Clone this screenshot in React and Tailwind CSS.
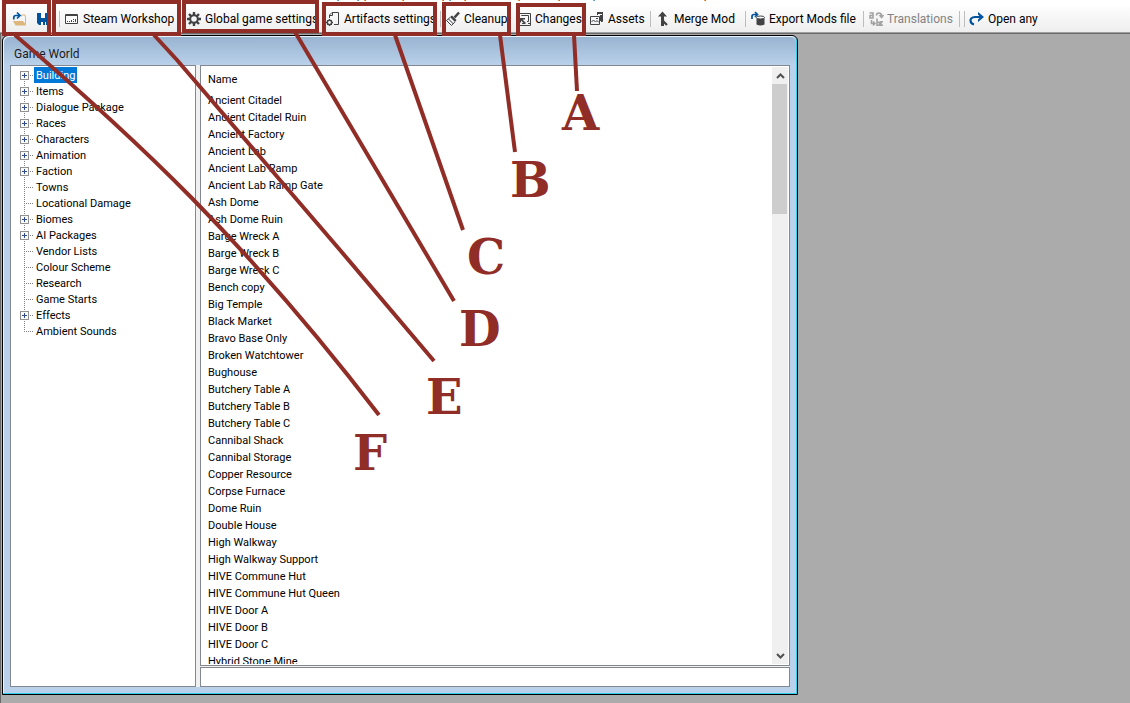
const INK = '#404244';

function Icon({ children }) {
  return (
    <svg viewBox="0 0 16 16" className="h-4 w-4 shrink-0" aria-hidden="true">
      {children}
    </svg>
  );
}

const OpenIcon = () => (
  <Icon>
    <path d="M9.500 5.500V4H13v1.500h.500V13" fill="none" stroke="#dcb67a" />
    <path d="M1 10h10l3.500 4.500H3.500z" fill="#dcb67a" />
    <path d="M1.800 8.500V6.500Q1.800 4.500 4 4.500h3.500M5 1.500l3 3-3 3" fill="none" stroke="#00539c" strokeWidth="1.700" />
  </Icon>
);
const SaveIcon = () => (
  <Icon>
    <path d="M1 2h13v12H3l-2-2z" fill="#00539c" />
    <path d="M5 2h4v5H5zM5 11h2v3H5zM9 11h1v3H9z" fill="#fff" />
  </Icon>
);
const WorkshopIcon = () => (
  <Icon>
    <path d="M1.500 3.500h12v9h-12z" fill="#fafafa" stroke={INK} />
    <path d="M1 4.500h13" stroke={INK} strokeWidth="1" />
    <path d="M3 10h1v1H3zM5 10h1v1H5zM7 9h1v2H7zM9 8h1v1H9zM9 10h1v1H9zM11 8h1v3h-1z" fill={INK} />
  </Icon>
);
const GearIcon = () => (
  <Icon>
    <g transform="translate(8 8)" fill="none" stroke={INK}>
      <circle r="3.800" strokeWidth="2" />
      <path
        strokeWidth="2.400"
        d="M0-4V-7M0 4V7M-4 0H-7M4 0H7M2.900-2.900L5-5M-2.900-2.900L-5-5M2.900 2.900L5 5M-2.900 2.900L-5 5"
      />
    </g>
  </Icon>
);
const ArtifactIcon = () => (
  <Icon>
    <path d="M4.500 7V4L7 1.500h6.500v12H9" fill="none" stroke={INK} />
    <path d="M4 4.500h3.500V1" fill="none" stroke={INK} />
    <circle cx="4.500" cy="11.500" r="2.200" fill="none" stroke={INK} strokeWidth="1.500" />
    <path d="M4.500 8v1.500M4.500 13.500V15M1 11.500h1.500M6.500 11.500H8M2 9l1 1M6 13l1 1M7 9l-1 1M3 13l-1 1" stroke={INK} />
  </Icon>
);
const BroomIcon = () => (
  <Icon>
    <path d="M14 1.500L9.500 6.500" stroke={INK} strokeWidth="2.600" />
    <path d="M7 4.500l4.500 4.500L10 11 5 6z" fill={INK} />
    <path d="M5 6.500L1.500 9.500l5 5L9.800 11M3.500 8l5 5" fill="none" stroke={INK} />
  </Icon>
);
const ChangesIcon = () => (
  <Icon>
    <path d="M3.500 5V2.500h11v10H12M5.500 5v-.5h7v6H11M3.500 11v3.500H14.500V12M6 12.500h3" fill="none" stroke={INK} />
    <path d="M3 7h6v1.500H6.500L10 12l-1.200 1.200L5 9.500v2H3z" fill={INK} />
  </Icon>
);
const AssetsIcon = () => (
  <Icon>
    <path d="M1.500 5.500h9v8h-9z" fill="none" stroke={INK} />
    <path d="M2.500 11l2-2 2 2 1.500-1.500 2 2" fill="none" stroke={INK} />
    <path d="M7 7h2v1H7zM8 1h6v2H8zM12 4h2v6h-2z" fill={INK} />
    <path d="M8.500 4V1.500h5v9H12M11.500 4v6" fill="none" stroke={INK} />
  </Icon>
);
const MergeIcon = () => (
  <Icon>
    <path d="M8 8v2l4 4" fill="none" stroke={INK} strokeWidth="2.200" />
    <path d="M7.500 .5l4.500 5H3zM6 5h3v10H6z" fill={INK} />
  </Icon>
);
const ExportIcon = () => (
  <Icon>
    <path d="M2 8V5.500Q2 3.500 4 3.500h3M5 1l2.500 2.500L5 6" fill="none" stroke="#00539c" strokeWidth="1.700" />
    <path d="M6.500 7v6.500q4 2 8 0V7z" fill={INK} />
    <ellipse cx="10.500" cy="6.500" rx="4" ry="1.500" fill="#f5f5f5" stroke={INK} />
  </Icon>
);
const TranslateIcon = () => (
  <Icon>
    <g fill="none" stroke="#a3a3a3" strokeWidth="1.600">
      <path d="M1.500 2h3.500v5H2V4.500h3M8.500 4.500Q8.500 2 11 2t2.500 3M11.500 4l2 2.500 2-2.500" />
      <path d="M3.500 9v3.500h3M5 10.500l2 2-2 2M9 7.500v6.700h2.500v-3H9M15 10.700h-2v3.500h2" />
    </g>
  </Icon>
);
const RedoIcon = () => (
  <Icon>
    <path d="M5 13.500Q1.500 12.500 1.500 9.500T6 6h6" fill="none" stroke="#00539c" strokeWidth="2.200" />
    <path d="M9 1l6 5-6 5V8.500L11.500 6 9 3.500z" fill="#00539c" />
  </Icon>
);

function ToolButton({ icon, label, className = '', disabled, name }) {
  return (
    <button
      type="button"
      disabled={disabled}
      aria-label={name}
      className={`flex h-full shrink-0 items-center gap-[3px] whitespace-nowrap ${disabled ? 'text-[#838383]' : 'text-black'} ${className}`}
    >
      {icon}
      {label && <span>{label}</span>}
    </button>
  );
}

const Separator = () => <span className="mr-1 h-4 w-px shrink-0 bg-[#bdbdbd]" />;

const TICKS = [338, 358, 365, 403, 443, 450, 465, 519, 559, 594, 705];

function Toolbar() {
  return (
    <header className="shrink-0 overflow-hidden border-b border-[#696969] bg-white">
      <svg width="720" height="7" viewBox="0 0 720 7" className="block" aria-hidden="true">
        {TICKS.map((x) => (
          <g key={x}>
            <rect x={x - 1} y="0" width="1" height="1" fill="#e8a04c" />
            <rect x={x} y="0" width="1" height="1" fill="#4a90c8" />
          </g>
        ))}
      </svg>
      <div
        role="toolbar"
        aria-label="Main"
        className="flex h-[26px] items-center border-b border-[#a0a0a0] bg-gradient-to-b from-[#fdfdfd] to-[#eeeeee] pb-px pl-3 font-['Roboto','Open_Sans',sans-serif] text-[12px]"
      >
        <ToolButton icon={<OpenIcon />} name="Open" className="w-6" />
        <ToolButton icon={<SaveIcon />} name="Save" className="w-[23px]" />
        <Separator />
        <ToolButton icon={<WorkshopIcon />} label="Steam Workshop" className="w-[122px]" />
        <ToolButton icon={<GearIcon />} label="Global game settings" className="w-[139px]" />
        <ToolButton icon={<ArtifactIcon />} label="Artifacts settings" className="w-[115px]" />
        <Separator />
        <ToolButton icon={<BroomIcon />} label="Cleanup" className="w-[71px]" />
        <ToolButton icon={<ChangesIcon />} label="Changes" className="w-[73px]" />
        <ToolButton icon={<AssetsIcon />} label="Assets" className="w-[61px]" />
        <Separator />
        <ToolButton icon={<MergeIcon />} label="Merge Mod" className="w-[90px]" />
        <Separator />
        <ToolButton icon={<ExportIcon />} label="Export Mods file" className="w-[113px]" />
        <Separator />
        <ToolButton icon={<TranslateIcon />} label="Translations" className="w-[91px]" disabled />
        <Separator />
        <Separator />
        <ToolButton icon={<RedoIcon />} label="Open any" />
      </div>
    </header>
  );
}

const CATEGORIES = [
  ['Building', true], ['Items', true], ['Dialogue Package', true], ['Races', true],
  ['Characters', true], ['Animation', true], ['Faction', true], ['Towns', false],
  ['Locational Damage', false], ['Biomes', true], ['AI Packages', true],
  ['Vendor Lists', false], ['Colour Scheme', false], ['Research', false],
  ['Game Starts', false], ['Effects', true], ['Ambient Sounds', false],
];

const NAMES = [
  'Ancient Citadel', 'Ancient Citadel Ruin', 'Ancient Factory', 'Ancient Lab',
  'Ancient Lab Ramp', 'Ancient Lab Ramp Gate', 'Ash Dome', 'Ash Dome Ruin',
  'Barge Wreck A', 'Barge Wreck B', 'Barge Wreck C', 'Bench copy', 'Big Temple',
  'Black Market', 'Bravo Base Only', 'Broken Watchtower', 'Bughouse',
  'Butchery Table A', 'Butchery Table B', 'Butchery Table C', 'Cannibal Shack',
  'Cannibal Storage', 'Copper Resource', 'Corpse Furnace', 'Dome Ruin',
  'Double House', 'High Walkway', 'High Walkway Support', 'HIVE Commune Hut',
  'HIVE Commune Hut Queen', 'HIVE Door A', 'HIVE Door B', 'HIVE Door C',
  'Hybrid Stone Mine',
];

function Branch({ expandable, first, last }) {
  return (
    <svg viewBox="0 0 16 16" className="h-4 w-4 shrink-0" aria-hidden="true">
      <path
        d={`M4.500 ${first ? 8 : 0}V${last ? 9 : 16}M4 8.500H13`}
        stroke="#808080"
        strokeDasharray="1 1"
        fill="none"
      />
      {expandable && (
        <>
          <rect x=".5" y="4.500" width="8" height="8" fill="#fafafa" stroke="#919191" />
          <path d="M2 8.500h5M4.500 6v5" stroke="#2f4a8c" />
        </>
      )}
    </svg>
  );
}

function CategoryTree() {
  return (
    <ul role="tree" aria-label="Categories" className="w-[186px] shrink-0 border border-[#828790] bg-white pt-px pl-[9px]">
      {CATEGORIES.map(([label, expandable], i) => (
        <li key={label} role="treeitem" aria-selected={i === 0} className="flex h-4 items-center">
          <Branch expandable={expandable} first={i === 0} last={i === CATEGORIES.length - 1} />
          <span
            className={`h-4 pr-[2px] leading-[18px] whitespace-nowrap ${i === 0 ? '-ml-[2px] bg-[#0078d7] pl-[2px] text-white' : ''}`}
          >
            {label}
          </span>
        </li>
      ))}
    </ul>
  );
}

function ScrollBar() {
  return (
    <div className="flex w-4 shrink-0 flex-col bg-[#f0f0f0]">
      <button type="button" aria-label="Scroll up" className="flex h-[17px] items-center justify-center">
        <svg viewBox="0 0 9 6" className="h-[6px] w-[9px]"><path d="M1 5l3.500-3.500L8 5" fill="none" stroke="#505050" strokeWidth="2" /></svg>
      </button>
      <div className="mr-px h-[130px] bg-[#cdcdcd]" />
      <button type="button" aria-label="Scroll down" className="mt-auto flex h-[17px] items-center justify-center">
        <svg viewBox="0 0 9 6" className="h-[6px] w-[9px]"><path d="M1 1l3.500 3.500L8 1" fill="none" stroke="#505050" strokeWidth="2" /></svg>
      </button>
    </div>
  );
}

function ItemList() {
  return (
    <div className="flex min-h-0 flex-1 border border-[#828790] bg-white p-px">
      <div className="min-w-0 flex-1 overflow-hidden">
        <table className="w-full text-left">
          <thead>
            <tr className="h-[25px]">
              <th className="p-0 pl-[6px] align-top leading-[25px] font-normal">Name</th>
            </tr>
          </thead>
          <tbody>
            {NAMES.map((name) => (
              <tr key={name} className="h-[17px]">
                <td className="p-0 pl-[6px] leading-[17px]">{name}</td>
              </tr>
            ))}
          </tbody>
        </table>
      </div>
      <ScrollBar />
    </div>
  );
}

function GameWorldWindow() {
  return (
    <section
      aria-label="Game World"
      className="flex w-[796px] max-w-full flex-col rounded-t-md border border-black bg-[#b9d1ea] shadow-[inset_-1px_-1px_0_#2fd0ee,inset_1px_1px_0_#e8f3fb]"
    >
      <h1 className="m-px mb-0 h-7 shrink-0 rounded-t-md bg-gradient-to-b from-[#99b4d1] to-[#b9d1ea] pl-[10px] font-['Roboto','Open_Sans',sans-serif] text-[12px] leading-[34px] text-[#1c1c1c]">
        Game World
      </h1>
      <div className="mx-[7px] mb-[7px] flex min-h-0 flex-1 gap-1 bg-[#f0f0f0]">
        <CategoryTree />
        <div className="flex min-w-0 flex-1 flex-col gap-px">
          <ItemList />
          <input type="text" aria-label="Filter" className="h-[20px] w-full shrink-0 border border-[#828790] bg-white px-2 outline-none" />
        </div>
      </div>
    </section>
  );
}

function Callouts() {
  return (
    <div className="pointer-events-none absolute inset-0 overflow-hidden font-['DejaVu_Serif',serif] text-[48px] leading-[48px] font-bold text-[#912d27]">
      <svg width="700" height="480" viewBox="0 0 700 480" className="absolute top-0 left-0" aria-hidden="true">
        <g fill="none" stroke="#912d27" strokeWidth="4">
          <rect x="4" y="2" width="45" height="32" />
          <rect x="54" y="2" width="125" height="32" />
          <rect x="184" y="2" width="133" height="29" />
          <rect x="324" y="4" width="111" height="30" />
          <rect x="444" y="4" width="65" height="30" />
          <rect x="518" y="5" width="66" height="29" />
          <path d="M15 35C135 138 245 240 379 415" />
          <path d="M154 35L177 60L340 250L434 361" />
          <path d="M295 32L454 301" />
          <path d="M395 35L463 230" />
          <path d="M500 35L515 152" />
          <path d="M574 35L577 91" />
        </g>
      </svg>
      <span className="absolute top-[89px] left-[562px]">A</span>
      <span className="absolute top-[156px] left-[510px]">B</span>
      <span className="absolute top-[233px] left-[467px]">C</span>
      <span className="absolute top-[305px] left-[459px]">D</span>
      <span className="absolute top-[373px] left-[426px]">E</span>
      <span className="absolute top-[429px] left-[353px]">F</span>
    </div>
  );
}

export default function App() {
  return (
    <div className="relative flex h-screen flex-col overflow-hidden bg-[#ababab] font-['Roboto','Liberation_Sans',sans-serif] text-[11px] text-black">
      <Toolbar />
      <main className="flex min-h-0 flex-1 border-l border-[#696969] pt-px pb-2 pl-px">
        <GameWorldWindow />
      </main>
      <Callouts />
    </div>
  );
}
